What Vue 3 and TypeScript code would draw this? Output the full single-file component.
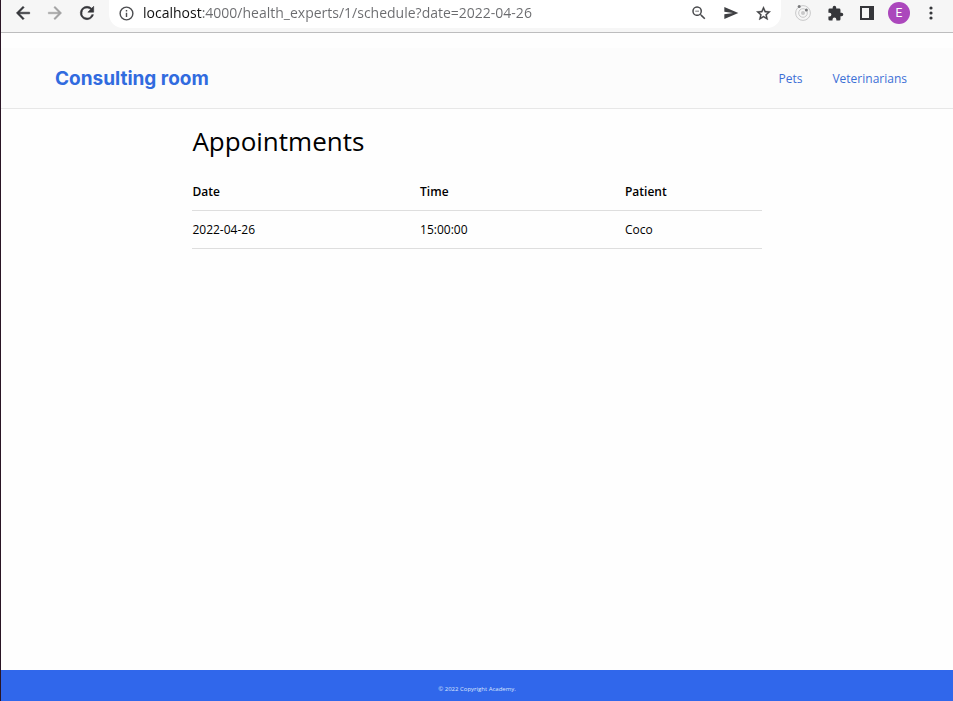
<script setup lang="ts">
import { ref } from 'vue'

interface Appointment {
  date: string
  time: string
  patient: string
}

const address = ref('localhost:4000/health_experts/1/schedule?date=2022-04-26')
const appointments: Appointment[] = [
  { date: '2022-04-26', time: '15:00:00', patient: 'Coco' },
]
</script>

<template>
  <div class="window">
    <div class="toolbar">
      <div class="history">
        <button type="button" aria-label="Back">
          <svg viewBox="0 0 24 24" width="20" height="20"><path d="M20 11H7.83l5.59-5.59L12 4l-8 8 8 8 1.41-1.41L7.83 13H20z" fill="#35363a" stroke="#35363a" stroke-width="0.6" /></svg>
        </button>
        <button type="button" aria-label="Forward">
          <svg viewBox="0 0 24 24" width="20" height="20"><path d="M12 4l-1.41 1.41L16.17 11H4v2h12.17l-5.58 5.59L12 20l8-8z" fill="#a2a2a3" stroke="#a2a2a3" stroke-width="0.5" /></svg>
        </button>
        <button type="button" aria-label="Reload">
          <svg viewBox="0 0 24 24" width="20" height="20"><path d="M17.65 6.35A7.96 7.96 0 0 0 12 4a8 8 0 1 0 7.73 10h-2.08A6 6 0 1 1 12 6c1.66 0 3.14.69 4.22 1.78L13 11h7V4z" fill="#35363a" stroke="#35363a" stroke-width="0.7" /></svg>
        </button>
      </div>
      <div class="omnibox">
        <button type="button" aria-label="Site information">
          <svg viewBox="0 0 24 24" width="17" height="17"><path d="M11 17h2v-6h-2zM11 9h2V7h-2zM12 2a10 10 0 1 0 0 20 10 10 0 0 0 0-20zm0 18a8 8 0 1 1 0-16 8 8 0 0 1 0 16z" fill="#4c4d50" /></svg>
        </button>
        <input v-model="address" class="address" type="text" aria-label="Address" spellcheck="false" />
        <div class="page-actions">
          <button type="button" aria-label="Zoom out">
            <svg viewBox="0 0 24 24" width="18" height="18"><path d="M15.5 14h-.79l-.28-.27A6.5 6.5 0 1 0 13.73 14.43l.27.28v.79l5 4.99L20.49 19zm-6 0a4.5 4.5 0 1 1 0-9 4.5 4.5 0 0 1 0 9zM7 9h5v1H7z" fill="#4a4b4e" /></svg>
          </button>
          <button type="button" aria-label="Share this page">
            <svg viewBox="0 0 24 24" width="16" height="16"><path d="M2 21l21-9L2 3v7l13 2-13 2z" fill="#3f4043" /></svg>
          </button>
          <button type="button" aria-label="Bookmark this page">
            <svg viewBox="0 0 24 24" width="17" height="17"><path d="M22 9.24l-7.19-.62L12 2 9.19 8.63 2 9.24l5.46 4.73L5.82 21 12 17.27 18.18 21l-1.63-7.03zM12 15.4l-3.76 2.27 1-4.28-3.32-2.88 4.38-.38L12 6.1l1.71 4.04 4.38.38-3.32 2.88 1 4.28z" fill="#3f4043" stroke="#3f4043" stroke-width="0.5" /></svg>
          </button>
        </div>
      </div>
      <div class="extensions">
        <button type="button" aria-label="Orbit extension">
          <svg viewBox="0 0 18 18" width="18" height="18"><g fill="none" stroke="#c9c9ca"><circle cx="9" cy="9" r="7.4" /><circle cx="9" cy="9" r="4.3" /></g><circle cx="9" cy="9" r="2" fill="#c9c9ca" /><circle cx="5.2" cy="2.6" r="1.5" fill="#77787a" /><circle cx="12.4" cy="6" r="1.5" fill="#77787a" /></svg>
        </button>
        <button type="button" aria-label="Extensions">
          <svg viewBox="0 0 24 24" width="17" height="17"><path d="M20.5 11H19V7a2 2 0 0 0-2-2h-4V3.5a2.5 2.5 0 0 0-5 0V5H4a2 2 0 0 0-1.99 2v3.8H3.5a2.7 2.7 0 0 1 0 5.4H2V20a2 2 0 0 0 2 2h3.8v-1.5a2.7 2.7 0 0 1 5.4 0V22H17a2 2 0 0 0 2-2v-4h1.5a2.5 2.5 0 0 0 0-5z" fill="#35363a" /></svg>
        </button>
        <button type="button" aria-label="Side panel">
          <svg viewBox="0 0 14 14" width="14" height="14"><path d="M0 0h14v14H0zM2 2v10h7V2z" fill="#35363a" fill-rule="evenodd" /></svg>
        </button>
        <button type="button" class="avatar" aria-label="Profile">E</button>
        <button type="button" aria-label="Menu">
          <svg viewBox="0 0 4 14" width="4" height="14"><g fill="#35363a"><circle cx="2" cy="2" r="1.6" /><circle cx="2" cy="7" r="1.6" /><circle cx="2" cy="12" r="1.6" /></g></svg>
        </button>
      </div>
    </div>

    <header class="site-header">
      <a class="brand" href="/">Consulting room</a>
      <nav>
        <a href="/pets">Pets</a>
        <a href="/health_experts">Veterinarians</a>
      </nav>
    </header>

    <main>
      <h1>Appointments</h1>
      <table>
        <thead>
          <tr>
            <th scope="col">Date</th>
            <th scope="col">Time</th>
            <th scope="col">Patient</th>
          </tr>
        </thead>
        <tbody>
          <tr v-for="item in appointments" :key="item.date + item.time">
            <td>{{ item.date }}</td>
            <td>{{ item.time }}</td>
            <td>{{ item.patient }}</td>
          </tr>
        </tbody>
      </table>
    </main>

    <footer>© 2022 Copyright Academy.</footer>
  </div>
</template>

<style>
body {
  margin: 0;
}
</style>

<style scoped>
.window {
  box-sizing: border-box;
  min-height: 100vh;
  display: flex;
  flex-direction: column;
  border-left: 1px solid #2a1525;
  background: #fefefe;
  color: #000;
  font-family: "Open Sans", "Noto Sans", sans-serif;
  font-size: 12px;
}

button {
  display: grid;
  place-items: center;
  flex: none;
  width: 32px;
  height: 26px;
  padding: 0;
  border: 0;
  background: none;
}

svg {
  display: block;
}

.toolbar {
  display: flex;
  align-items: flex-start;
  height: 32px;
  border-bottom: 1px solid #bdbdbe;
  background: #f6f6f6;
}

.history,
.page-actions,
.extensions {
  display: flex;
}

.history {
  padding: 0 6px;
}

.omnibox {
  flex: 1;
  display: flex;
  min-width: 0;
  height: 28px;
  padding-right: 2px;
  border-radius: 0 0 14px 14px;
  background: #fff;
}

.omnibox > button {
  width: 34px;
}

.address {
  box-sizing: border-box;
  flex: 1;
  min-width: 0;
  height: 26px;
  padding: 0 0 2px;
  border: 0;
  outline: 0;
  background: linear-gradient(to right, #111 59px, #6a6b6e 59px);
  background-clip: text;
  -webkit-background-clip: text;
  color: transparent;
  font: 14px "Open Sans", sans-serif;
}

.extensions {
  padding: 0 6px;
}

.avatar {
  width: 22px;
  height: 22px;
  margin: 2px 5px;
  border-radius: 50%;
  background: #ab47bc;
  color: #fff;
  font: 12px Roboto, sans-serif;
}

.site-header {
  display: flex;
  align-items: center;
  justify-content: space-between;
  height: 60px;
  margin-top: 15px;
  padding: 0 46px 0 54px;
  border-bottom: 1px solid #e7e7e7;
  background: #fcfcfc;
}

a {
  color: #3c6fd6;
  text-decoration: none;
}

.brand {
  color: #316bdf;
  font: 700 19px Inter, sans-serif;
}

nav {
  display: flex;
  gap: 30px;
}

main {
  box-sizing: border-box;
  flex: 1;
  width: 60%;
  margin: 0 auto;
  padding: 0 1px;
}

h1 {
  margin: 12px 0;
  font-size: 26px;
  font-weight: 400;
  line-height: 40px;
}

table {
  width: 100%;
  border-collapse: collapse;
  table-layout: fixed;
  line-height: 17px;
}

th,
td {
  padding: 10px 0;
  border-bottom: 1px solid #dedede;
  text-align: left;
}

th {
  font-weight: 600;
}

th:first-child {
  width: 40%;
}

th:nth-child(2) {
  width: 36%;
}

footer {
  box-sizing: border-box;
  height: 31px;
  padding-top: 8px;
  background: #3067eb;
  color: #dbe5fc;
  font-size: 6px;
  line-height: 22px;
  text-align: center;
}
</style>
